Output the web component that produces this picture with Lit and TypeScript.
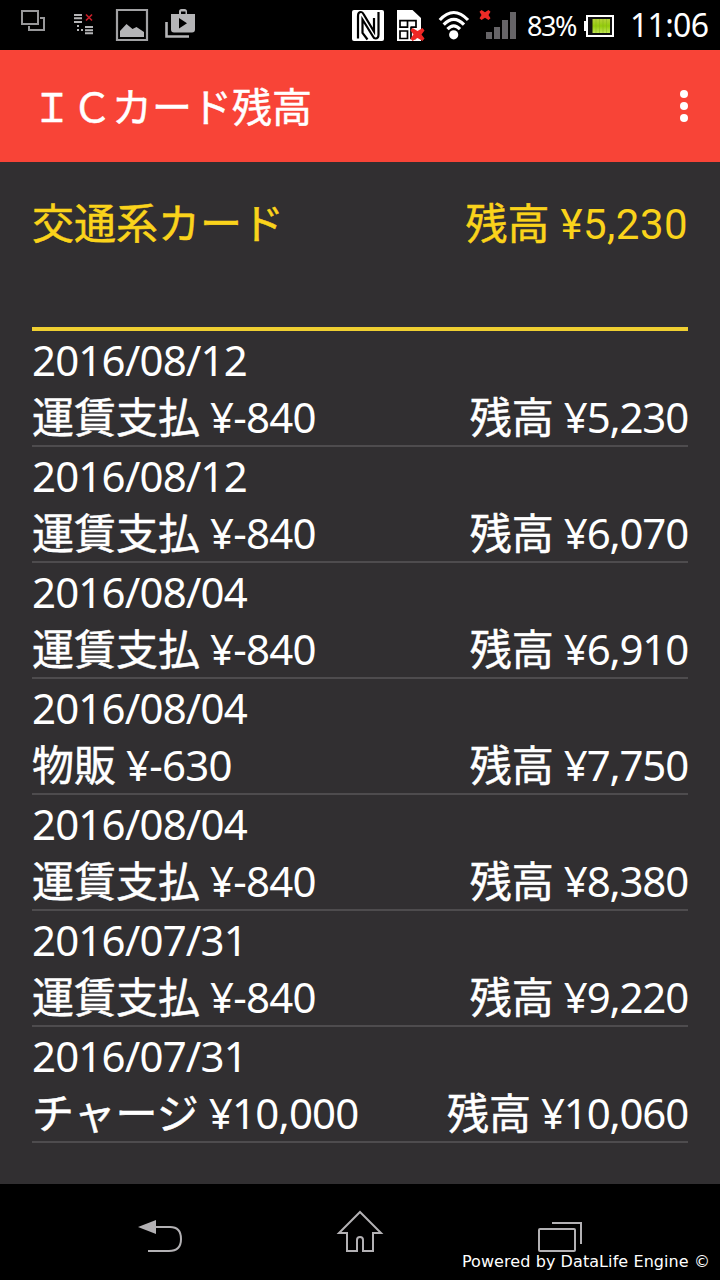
import { LitElement, html, css } from "lit";
import { customElement, property } from "lit/decorators.js";

interface Entry {
  date: string;
  kind: string;
  amount: string;
  balance: string;
}

const ENTRIES: Entry[] = [
  { date: "2016/08/12", kind: "運賃支払", amount: "¥-840", balance: "¥5,230" },
  { date: "2016/08/12", kind: "運賃支払", amount: "¥-840", balance: "¥6,070" },
  { date: "2016/08/04", kind: "運賃支払", amount: "¥-840", balance: "¥6,910" },
  { date: "2016/08/04", kind: "物販", amount: "¥-630", balance: "¥7,750" },
  { date: "2016/08/04", kind: "運賃支払", amount: "¥-840", balance: "¥8,380" },
  { date: "2016/07/31", kind: "運賃支払", amount: "¥-840", balance: "¥9,220" },
  { date: "2016/07/31", kind: "チャージ", amount: "¥10,000", balance: "¥10,060" },
];

@customElement("status-bar")
class StatusBar extends LitElement {
  static styles = css`
    :host { display: flex; justify-content: space-between; height: 50px; background: #000; color: #fff;
      font-family: "Noto Sans", sans-serif; }
    svg { display: block; flex: none; }
    .right { display: flex; }
    .percent { width: 57px; font-size: 27px; line-height: 51px; letter-spacing: -1.5px; white-space: nowrap; }
    .clock { width: 90px; font-size: 32px; line-height: 50px; letter-spacing: -0.7px; white-space: nowrap; }
  `;
  render() {
    return html`
      <svg width="210" height="50" fill="#b5b5b7">
        <g fill="none" stroke="#98989a" stroke-width="2">
          <path d="M22 11h16v13H22zM40 18h4v12H29v-4" />
        </g>
        <path d="M74 14h8v2h-8zM74 17.300h8v2h-8zM74 21h8v2h-8zM85 26h8v2h-8zM85 29.300h8v2h-8zM85 32.300h8v2h-8zM77 25h2v2h-2zM77 29h2v2h-2zM81 29h2v2h-2z" />
        <path d="M86 14.500l6 6M92 14.500l-6 6" stroke="#c51f28" stroke-width="1.700" />
        <path d="M117 10h30v30h-30z" fill="none" stroke="#a2a2a4" stroke-width="2.200" />
        <path d="M120 37v-6l6.500-7 6 5 4-2 7.500 5v5z" />
        <path d="M171 14h8v-2.500q0-2.500 2.500-2.500h3q2.500 0 2.500 2.500V14h8v15.500q0 3-3 3h-18q-3 0-3-3zm10 0h4.500v-2.500H181zM179 18v10.500l8-5.200z" fill-rule="evenodd" />
        <path d="M166.500 22v14.500H189" fill="none" stroke="#b5b5b7" stroke-width="2.600" />
      </svg>
      <div class="right">
        <svg width="176" height="50" viewBox="351 0 176 50">
          <rect x="352" y="10" width="32" height="31" rx="2" fill="#fff" />
          <path d="M358 38.500V16q0-4 3-4 1.500 0 2.500 2L374 31.500V18" fill="none" stroke="#000" stroke-width="2.200" />
          <path d="M378.500 12v22.500q0 4-3 4-1.500 0-2.500-2L362.500 19.500V33l5 6.500" fill="none" stroke="#000" stroke-width="2.200" />
          <path d="M397 10h15.500l8.500 8v23h-24z" fill="#fff" />
          <path d="M400 20.700h7.500v6.500H400zM407.500 20.700h8.500v6.500h-5.500M400 31h7.500v7.500H400zM411 27v11.500h5" fill="none" stroke="#000" stroke-width="1.700" />
          <path d="M412.500 28l5 3 5-3 2 2.500-3 4 3 4-2 2.500-5-3-5 3-2-2.500 3-4-3-4z" fill="#ef2724" />
          <circle cx="453.700" cy="34.800" r="4.600" fill="#fff" />
          <g fill="none" stroke="#fff" stroke-width="3.200">
            <path d="M439.800 20Q453.700 5 468 20" />
            <path d="M443.700 24.700Q453.700 14 464 24.700" />
            <path d="M447.500 29.200Q453.700 22.500 460 29.200" />
          </g>
          <path d="M481.500 10l3.500 2.300 3.500-2.300 2 1.800-2 3.200 2 3.200-2 1.800-3.500-2.300-3.500 2.300-2-1.800 2-3.200-2-3.200z" fill="#ed2b27" />
          <path d="M486 32h6v7h-6zM494 27h6v12h-6zM502 20h6v19h-6zM510 12h6v27h-6z" fill="#666467" />
        </svg>
        <div class="percent">83%</div>
        <svg width="46" height="50" viewBox="584 0 46 50">
          <defs>
            <linearGradient id="charge" x1="0" y1="0" x2="0" y2="1">
              <stop offset="0" stop-color="#b6d33a" /><stop offset="0.500" stop-color="#93cc0b" /><stop offset="1" stop-color="#c0e653" />
            </linearGradient>
          </defs>
          <path d="M586 15h28v22h-28v-6h-2v-10h2z" fill="#fff" />
          <path d="M588 17h24v18h-24z" fill="#111" />
          <path d="M592.500 19H610v14h-17.500z" fill="url(#charge)" />
          <path d="M596 19v14M599.500 19v14M603 19v14M606.500 19v14" stroke="#86ae1d" stroke-width="0.500" />
        </svg>
        <div class="clock">11:06</div>
      </div>`;
  }
}

@customElement("app-header")
class AppHeader extends LitElement {
  static styles = css`
    :host { display: flex; justify-content: space-between; height: 112px; box-sizing: border-box; padding: 0 32px;
      background: #f84437; color: #fff; }
    .title { font: 400 40px/110px "Noto Sans CJK JP", sans-serif; white-space: nowrap; -webkit-text-stroke: 0.5px currentColor; }
    svg { display: block; }
  `;
  render() {
    return html`
      <div class="title">ＩＣカード残高</div>
      <svg width="8" height="112" fill="#fff">
        <circle cx="4" cy="44" r="4" /><circle cx="4" cy="56" r="4" /><circle cx="4" cy="68" r="4" />
      </svg>`;
  }
}

@customElement("history-row")
class HistoryRow extends LitElement {
  @property({ attribute: false }) entry!: Entry;
  static styles = css`
    :host { display: block; height: 116px; box-sizing: border-box; border-bottom: 2px solid #4e4c4e; color: #fff;
      font: 400 42px/57px "Noto Sans", "Noto Sans CJK JP", sans-serif; white-space: nowrap; }
    .date { height: 57px; letter-spacing: -0.850px; }
    .line { display: flex; justify-content: space-between; height: 57px; }
    .pair { display: flex; gap: 10px; }
    .ja { -webkit-text-stroke: 0.500px currentColor; }
    .num { letter-spacing: -0.800px; }
    .balance { letter-spacing: -1.200px; }
  `;
  render() {
    const e = this.entry;
    return html`
      <div class="date">${e.date}</div>
      <div class="line">
        <div class="pair"><span class="ja">${e.kind}</span><span class="num">${e.amount}</span></div>
        <div class="pair"><span class="ja">残高</span><span class="balance">${e.balance}</span></div>
      </div>`;
  }
}

@customElement("nav-bar")
class NavBar extends LitElement {
  static styles = css`
    :host { display: grid; position: relative; height: 96px; background: #000; }
    svg { display: block; }
    .credit { position: absolute; right: 10px; bottom: 8px; color: #fff;
      font: 16px/20px "DejaVu Sans", sans-serif; letter-spacing: 0.080px; white-space: nowrap; }
  `;
  render() {
    return html`
      <svg width="720" height="96" fill="none" stroke="#b3b1b4" stroke-width="2">
        <path d="M155 43h15q11 0 11 12t-12 12h-21" />
        <path d="M138 43l18-7v14z" fill="#b3b1b4" stroke="none" />
        <path d="M360 28l21 21h-8v18h-10V56q0-3-3-3t-3 3v11h-10V49h-8z" />
        <rect x="539" y="45" width="36" height="22" rx="1" />
        <path d="M552 39h29v21" />
      </svg>
      <div class="credit">Powered by DataLife Engine ©</div>`;
  }
}

@customElement("app-root")
class AppRoot extends LitElement {
  static styles = css`
    :host { display: flex; flex-direction: column; width: 720px; height: 1280px; overflow: hidden; background: #312f31; }
    main { flex: 1; padding: 0 32px; }
    .summary { display: flex; justify-content: space-between; height: 169px; box-sizing: border-box; padding-top: 33px;
      border-bottom: 4px solid #efcf31; color: #fad31b; white-space: nowrap;
      font: 400 42px/59px "Roboto", "Noto Sans CJK JP", sans-serif; }
    .total { display: flex; gap: 11px; }
    .ja { -webkit-text-stroke: 0.500px currentColor; }
    .sum { letter-spacing: 0.450px; }
  `;
  render() {
    return html`
      <status-bar></status-bar>
      <app-header></app-header>
      <main>
        <div class="summary">
          <span class="ja">交通系カード</span>
          <div class="total"><span class="ja">残高</span><span class="sum">¥5,230</span></div>
        </div>
        ${ENTRIES.map((e) => html`<history-row .entry=${e}></history-row>`)}
      </main>
      <nav-bar></nav-bar>`;
  }
}
